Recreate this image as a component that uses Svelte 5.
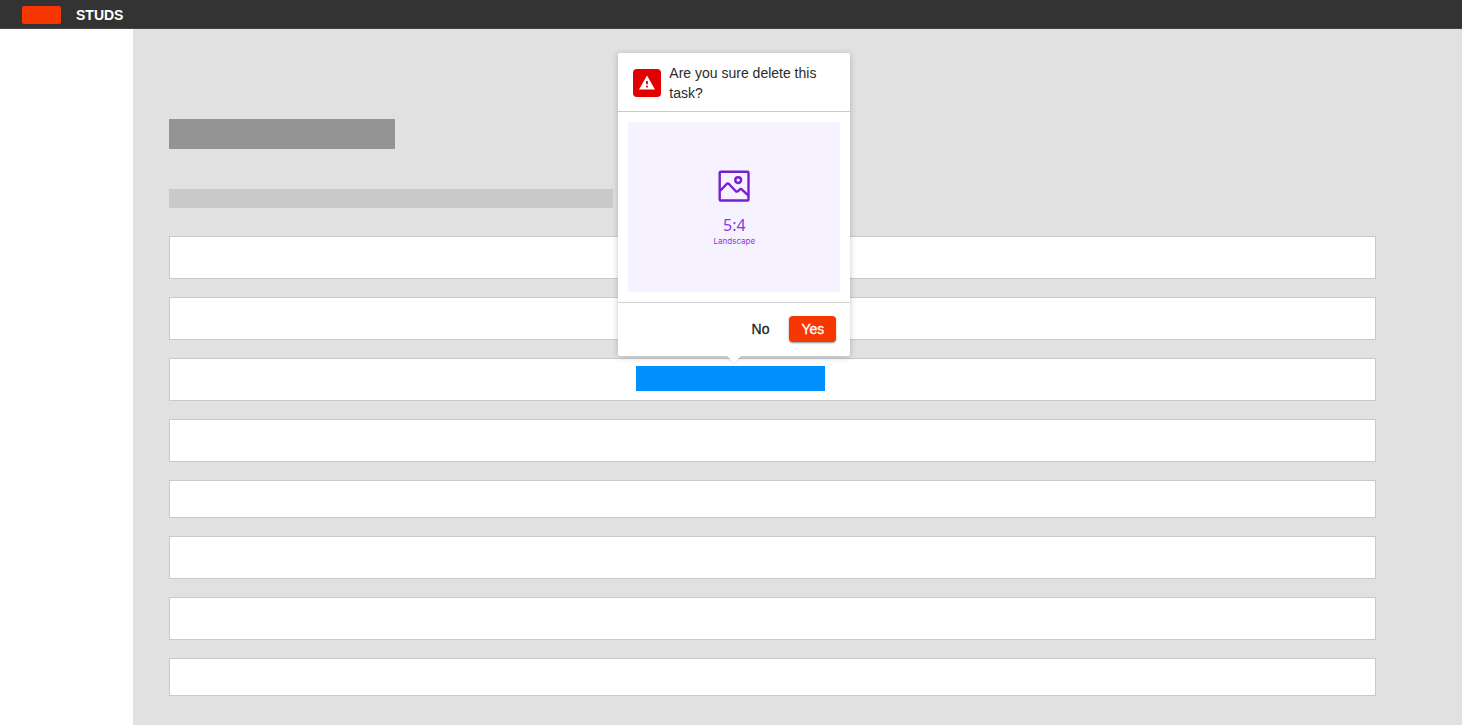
<script>
  let open = $state(true);
  const rows = [
    { compact: false },
    { compact: false },
    { compact: false, target: true },
    { compact: false },
    { compact: true },
    { compact: false },
    { compact: false },
    { compact: true }
  ];
</script>

<div class="app">
  <header class="topbar">
    <span class="logo"></span>
    <span class="brand">STUDS</span>
  </header>

  <div class="shell">
    <aside class="sidebar"></aside>

    <main class="content">
      <div class="title-block"></div>
      <div class="subtitle-block"></div>

      <div class="rows">
        {#each rows as row}
          <div class="row" class:compact={row.compact}>
            {#if row.target}
              <div class="anchor">
                <button
                  class="target"
                  type="button"
                  aria-label="Delete task"
                  onclick={() => (open = !open)}
                ></button>

                {#if open}
                  <div class="popover" role="dialog" aria-labelledby="confirm-title">
                    <div class="popover-head">
                      <span class="alert">
                        <svg viewBox="0 0 28 28" width="28" height="28" aria-hidden="true">
                          <path
                            fill="#fff"
                            fill-rule="evenodd"
                            d="M14 6.5 22 20.5H6ZM13.1 12v3.2h1.8V12ZM13.1 16.7v1.8h1.8v-1.8Z"
                          />
                        </svg>
                      </span>
                      <p id="confirm-title">Are you sure delete this task?</p>
                    </div>

                    <div class="popover-body">
                      <div class="placeholder">
                        <svg viewBox="0 0 32 32" width="32" height="32" fill="none" stroke="#761ed2" stroke-width="2.4" stroke-linejoin="round" aria-hidden="true">
                          <rect x="1.7" y="1.7" width="28.8" height="28.8" rx="1" />
                          <circle cx="20.2" cy="10.1" r="2.9" />
                          <path d="M2 21 8.4 14.2Q9.8 12.8 11.2 14.2L17.6 21Q19 22.3 20.2 21L21.6 19.6Q22.8 18.6 24 19.6L30.2 25.4" />
                        </svg>
                        <span class="ratio">5:4</span>
                        <span class="orientation">Landscape</span>
                      </div>
                    </div>

                    <div class="popover-foot">
                      <button class="btn" type="button" onclick={() => (open = false)}>No</button>
                      <button class="btn primary" type="button" onclick={() => (open = false)}>Yes</button>
                    </div>
                  </div>
                {/if}
              </div>
            {/if}
          </div>
        {/each}
      </div>
    </main>
  </div>
</div>

<style>
  :global(body) {
    margin: 0;
  }

  .app {
    display: flex;
    flex-direction: column;
    min-height: 100vh;
    font-family: "Liberation Sans", Arial, sans-serif;
    font-size: 14px;
    line-height: 20px;
    color: #2b2b2b;
  }

  .app * {
    box-sizing: border-box;
  }

  .topbar {
    display: flex;
    align-items: center;
    gap: 15px;
    padding: 5px 22px 3px;
    background: #333;
    border-bottom: 1px solid #444;
  }

  .logo {
    width: 39px;
    height: 18px;
    border-radius: 2px;
    background: #f63700;
  }

  .brand {
    color: #fff;
    font-weight: 700;
  }

  .shell {
    display: flex;
    flex: 1;
  }

  .sidebar {
    width: 133px;
    flex: none;
    background: #fff;
  }

  .content {
    flex: 1;
    min-width: 0;
    padding: 90px 86px 29px 36px;
    background: #e1e1e1;
  }

  .title-block {
    width: 226px;
    height: 30px;
    background: #949494;
  }

  .subtitle-block {
    width: 444px;
    height: 19px;
    margin-top: 40px;
    background: #c9c9c9;
  }

  .rows {
    display: flex;
    flex-direction: column;
    gap: 18px;
    margin-top: 28px;
  }

  .row {
    display: flex;
    align-items: flex-start;
    height: 43px;
    padding-top: 7px;
    border: 1px solid #c9c9c9;
    background: #fff;
  }

  .row.compact {
    height: 38px;
  }

  .anchor {
    position: relative;
    width: 189px;
    margin-left: 38.7%;
  }

  .target {
    display: block;
    width: 100%;
    height: 25px;
    padding: 0;
    border: 0;
    background: #0091ff;
    cursor: pointer;
  }

  .popover {
    position: absolute;
    bottom: calc(100% + 10px);
    left: -18px;
    z-index: 1;
    width: 232px;
    border-radius: 2px;
    background: #fff;
    box-shadow: 0 1px 6px rgba(0, 0, 0, 0.22);
  }

  .popover::after {
    content: "";
    position: absolute;
    top: 100%;
    left: 50%;
    margin-left: -7px;
    border: 7px solid transparent;
    border-bottom-width: 0;
    border-top-color: #fff;
    filter: drop-shadow(0 1px 1px rgba(0, 0, 0, 0.1));
  }

  .popover-head {
    display: flex;
    align-items: center;
    gap: 8px;
    padding: 10px 15px 8px;
    border-bottom: 1px solid #c9c9c9;
  }

  .popover-head p {
    margin: 0;
  }

  .alert {
    flex: none;
    width: 28px;
    height: 28px;
    border-radius: 4px;
    background: #e30000;
  }

  .alert svg {
    display: block;
  }

  .popover-body {
    padding: 10px;
  }

  .placeholder {
    display: flex;
    flex-direction: column;
    align-items: center;
    justify-content: center;
    aspect-ratio: 5 / 4;
    padding-top: 1px;
    background: #f7f2ff;
    color: #8a38e0;
    font-family: "Noto Sans", sans-serif;
  }

  .ratio {
    margin-top: 12px;
    font-size: 16px;
    line-height: 22px;
  }

  .orientation {
    font-family: Inter, sans-serif;
    font-size: 8px;
    line-height: 10px;
  }

  .popover-foot {
    display: flex;
    justify-content: flex-end;
    gap: 8px;
    padding: 13px 14px 14px;
    border-top: 1px solid #d2d2d2;
  }

  .btn {
    height: 26px;
    padding: 0 12px;
    border: 0;
    border-radius: 4px;
    background: transparent;
    color: #1c1c1c;
    font: 500 14px/26px "Liberation Sans", Arial, sans-serif;
    -webkit-text-stroke: 0.3px currentColor;
    cursor: pointer;
  }

  .btn.primary {
    background: #f63700;
    color: #fff;
    box-shadow: 0 1px 2px rgba(0, 0, 0, 0.45);
  }
</style>
